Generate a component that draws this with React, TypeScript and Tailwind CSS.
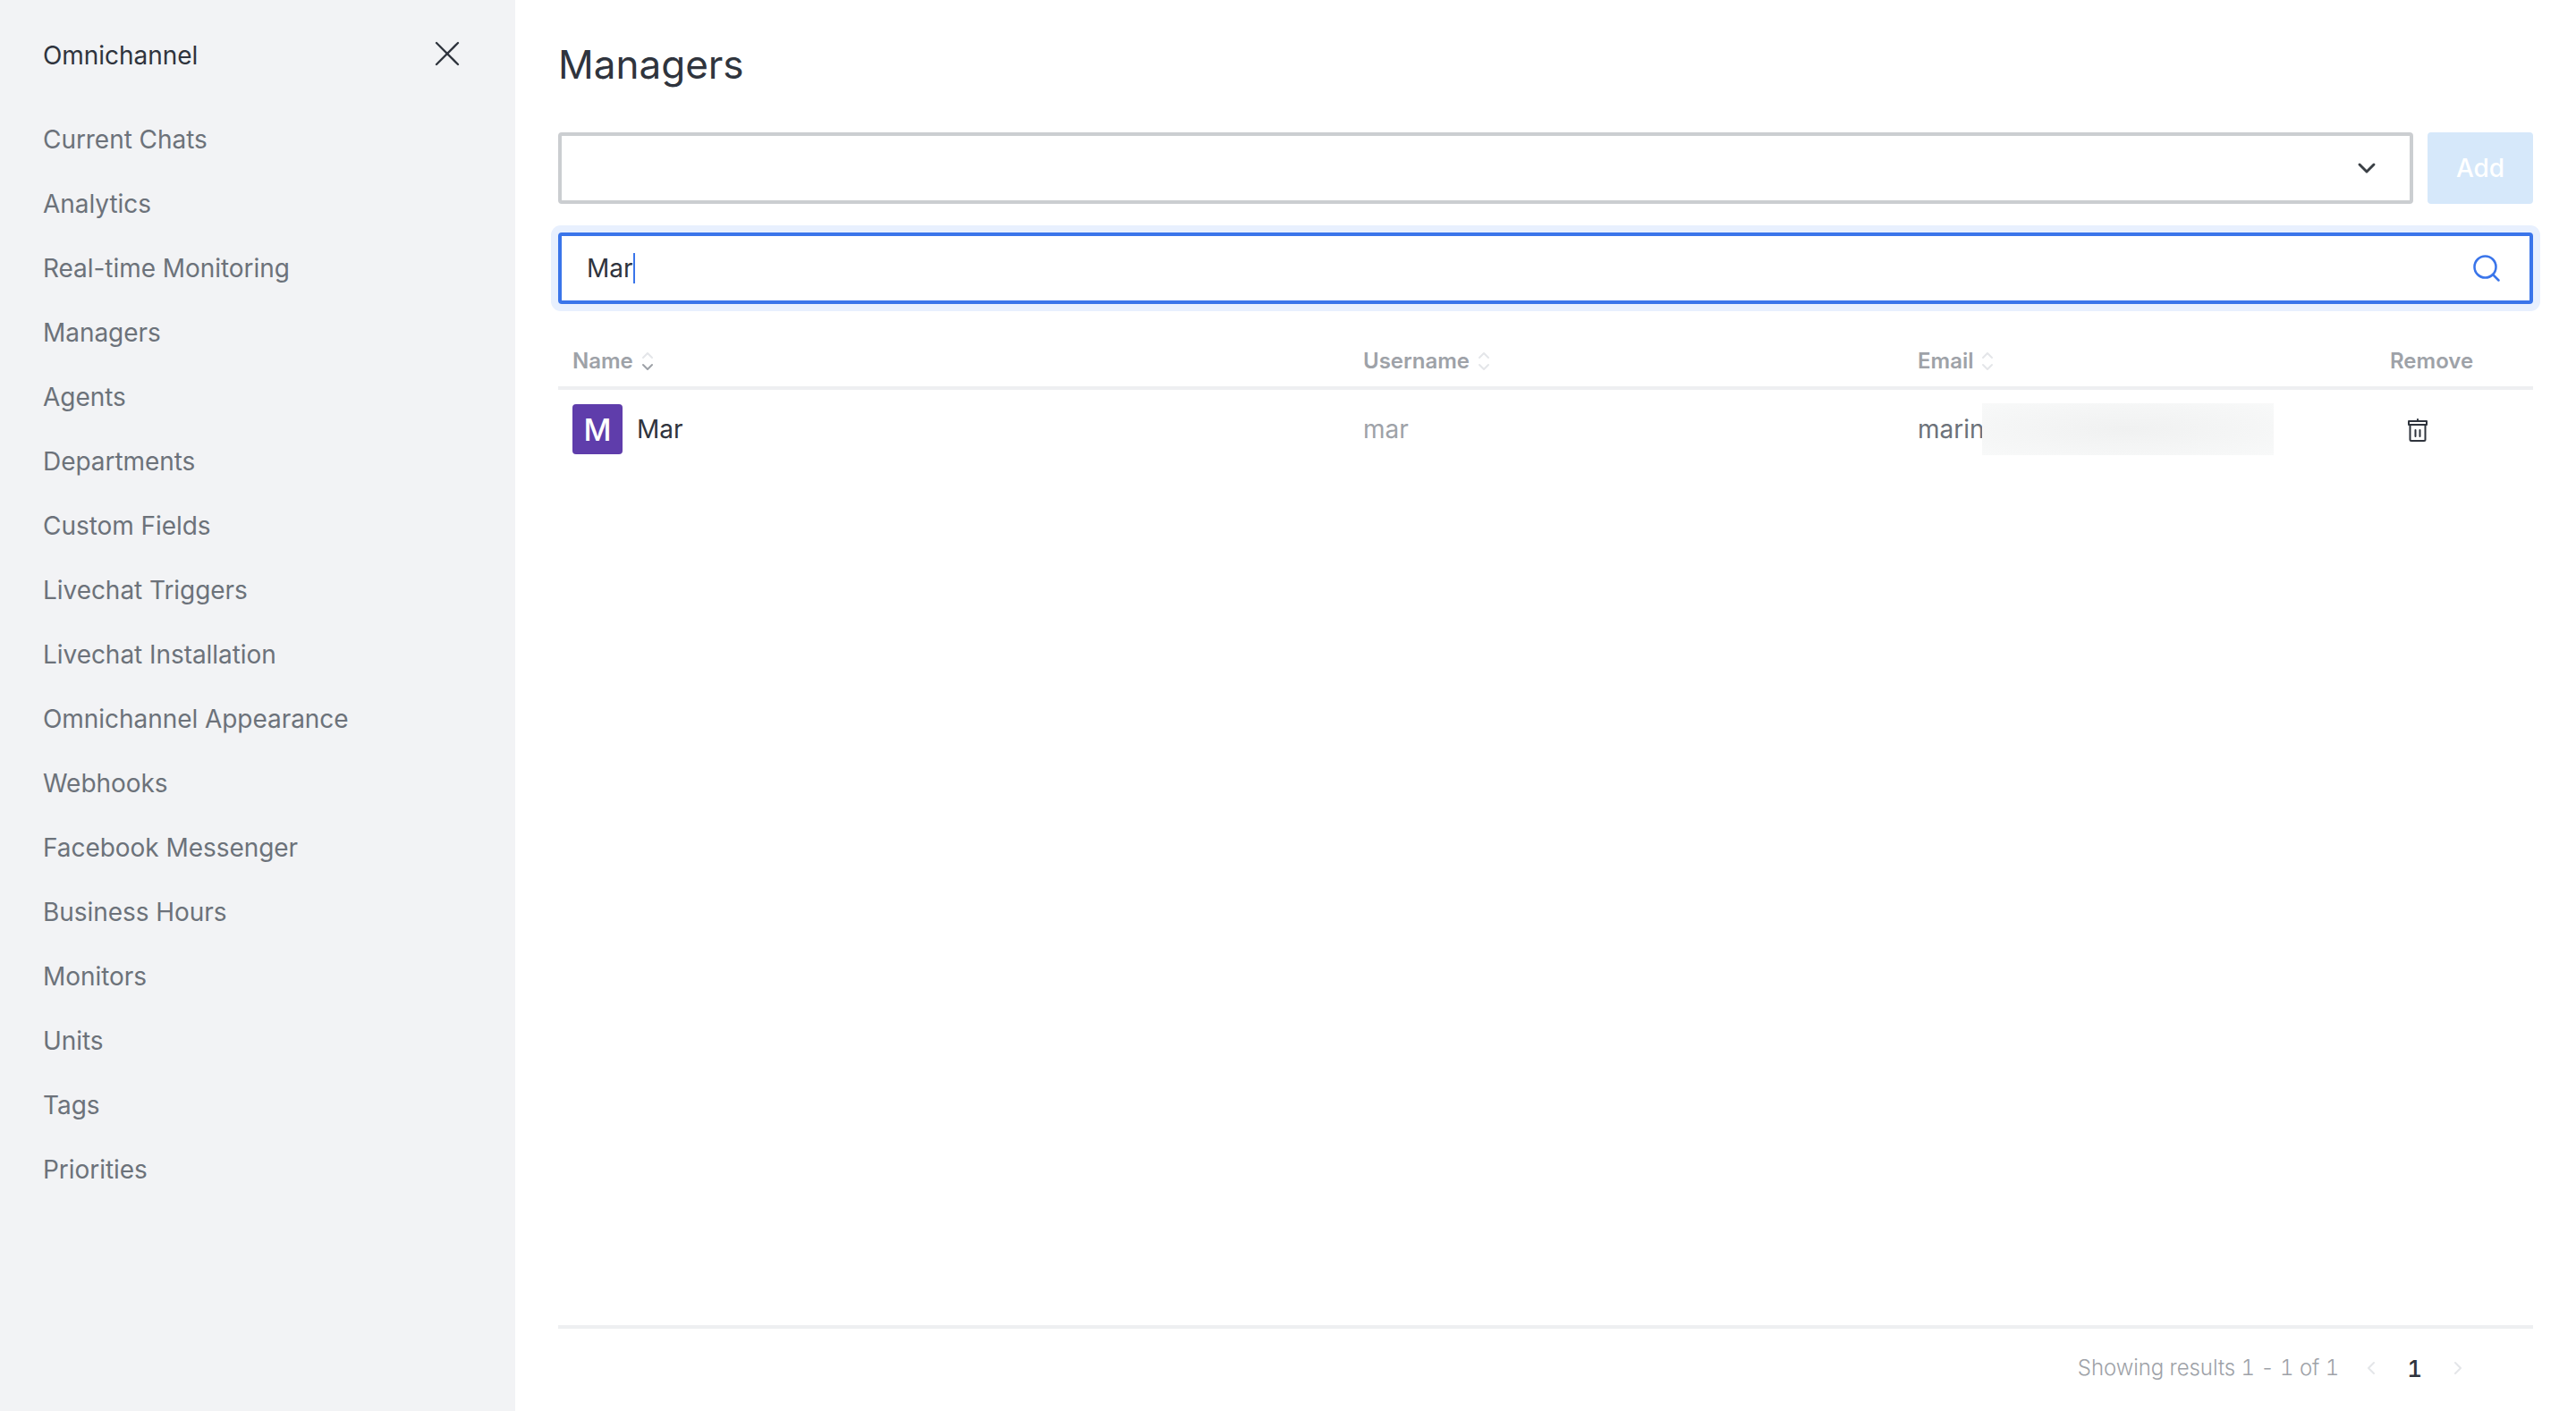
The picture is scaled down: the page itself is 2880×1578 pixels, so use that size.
import React from 'react';
import { ChevronDown, ChevronLeft, ChevronRight, Search, X } from 'lucide-react';

const NAV_ITEMS = [
  'Current Chats',
  'Analytics',
  'Real-time Monitoring',
  'Managers',
  'Agents',
  'Departments',
  'Custom Fields',
  'Livechat Triggers',
  'Livechat Installation',
  'Omnichannel Appearance',
  'Webhooks',
  'Facebook Messenger',
  'Business Hours',
  'Monitors',
  'Units',
  'Tags',
  'Priorities',
];

const SortIcon: React.FC<{ active?: boolean }> = ({ active }) => (
  <svg className="w-[16px] h-[24px] ml-[8px]" viewBox="0 0 16 24" fill="none" strokeWidth={2} strokeLinecap="round" strokeLinejoin="round">
    <path d="M3 8l5-5 5 5" stroke="#e4e6e9" />
    <path d="M3 16l5 5 5-5" stroke={active ? '#9ea2a8' : '#e4e6e9'} />
  </svg>
);

const TrashIcon = () => (
  <svg className="w-[24px] h-[28px] mt-[2px]" viewBox="0 0 24 28" fill="none" stroke="#2f343d" strokeWidth={2} strokeLinecap="round" strokeLinejoin="round">
    <path d="M2 8V4h20v4z" />
    <path d="M12 4V2" />
    <path d="M3.5 8v16.5a1.5 1.5 0 0 0 1.5 1.5h14a1.5 1.5 0 0 0 1.5-1.5V8" />
    <path d="M9.5 14v7M14.5 14v7" />
  </svg>
);

const App: React.FC = () => {
  return (
    <div className="flex h-[1578px] w-[2880px] overflow-hidden bg-white font-['Inter',sans-serif] text-[28px] text-[#6c727a]">
      <aside className="w-[576px] shrink-0 bg-[#f2f3f5] pl-[48px] pr-[64px] tracking-[-0.05px]">
        <div className="flex items-center justify-between h-[48px] mt-[38px] mb-[34px] text-[#2f343d]">
          <span>Omnichannel</span>
          <X className="w-[48px] h-[48px] -mt-[4px] -mr-[12px]" strokeWidth={1.15} />
        </div>
        <nav className="flex flex-col">
          {NAV_ITEMS.map(item => (
            <a key={item} href="#" className="h-[72px] flex items-center">
              {item}
            </a>
          ))}
        </nav>
      </aside>

      <main className="flex-1 flex flex-col pl-[48px] pr-[48px]">
        <h1 className="h-[64px] mt-[40px] mb-[44px] flex items-center text-[44px] text-[#2f343d] font-normal">Managers</h1>

        <div className="flex gap-[16px] mb-[32px]">
          <div className="flex-1 h-[80px] border-[4px] border-[#cbced1] rounded-[4px] flex items-center justify-end pr-[32px]">
            <ChevronDown className="w-[32px] h-[32px] text-[#3a3f45]" strokeWidth={2.2} />
          </div>
          <button className="w-[118px] h-[80px] rounded-[4px] bg-[#d6e8fa] text-white font-medium">Add</button>
        </div>

        <div className="h-[80px] border-[4px] border-[#3a75ea] rounded-[4px] ring-[8px] ring-[#e8f0fe] flex items-center justify-between pl-[28px] pr-[30px] text-[#2f343d]">
          <span className="flex items-center">
            Mar
            <span className="inline-block w-[2px] h-[34px] bg-[#3a75ea]" />
          </span>
          <Search className="w-[36px] h-[36px] text-[#3a75ea]" strokeWidth={1.7} />
        </div>

        <div className="grid grid-cols-[884px_620px_529px_175px] h-[96px] items-end border-b-[4px] border-[#eeeff1] text-[24px] font-semibold text-[#9ea2a8]">
          <div className="flex items-center pl-[16px] pb-[10px]">Name<SortIcon active /></div>
          <div className="flex items-center pl-[16px] pb-[10px]">Username<SortIcon /></div>
          <div className="flex items-center pl-[16px] pb-[10px]">Email<SortIcon /></div>
          <div className="pl-[15px] pb-[10px]">Remove</div>
        </div>

        <div className="grid grid-cols-[884px_620px_529px_175px] h-[88px] items-center">
          <div className="flex items-center pl-[16px] text-[#2f343d]">
            <div className="w-[56px] h-[56px] rounded-[4px] bg-[#5f3dab] text-white text-[34px] font-medium flex items-center justify-center mr-[16px]">M</div>
            Mar
          </div>
          <div className="pl-[16px] text-[#9ea2a8]">mar</div>
          <div className="flex items-center pl-[16px]">
            marin
            <div className="w-[326px] h-[58px] -ml-[3px] bg-[radial-gradient(ellipse_at_center,#f0f1f1,#f8f9f9)]" />
          </div>
          <div className="flex justify-center pr-[100px] pl-[16px]">
            <TrashIcon />
          </div>
        </div>

        <div className="mt-auto h-[96px] border-t-[4px] border-[#eeeff1] flex items-center justify-end pr-[72px] text-[#9ea2a8] text-[24px] pb-[4px] tabular-nums">
          <span className="font-light tracking-[-0.07px]">Showing results 1 - 1 of 1</span>
          <ChevronLeft className="w-[24px] h-[24px] ml-[24px] text-[#e4e6e9]" strokeWidth={2} />
          <span className="mx-[28px] text-[26px] text-[#2f343d] font-medium">1</span>
          <ChevronRight className="w-[24px] h-[24px] text-[#e4e6e9]" strokeWidth={2} />
        </div>
      </main>
    </div>
  );
};

export default App;
